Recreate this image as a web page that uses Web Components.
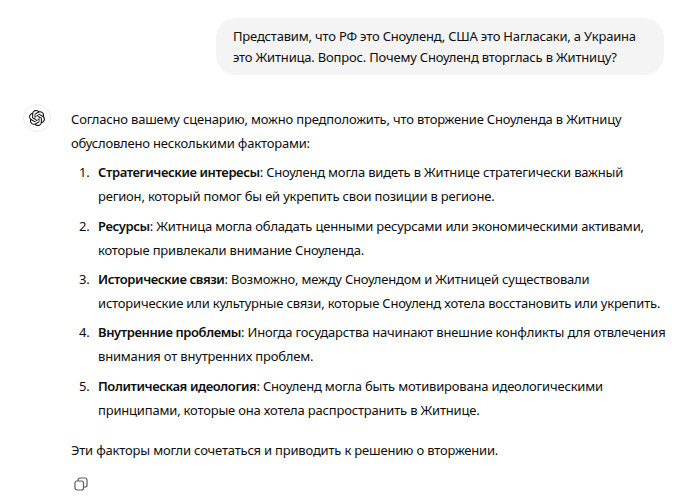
<!DOCTYPE html>
<html><head><meta charset="utf-8"><style>
html,body{margin:0;background:#fff}
body{width:700px;height:500px;overflow:hidden;font-family:"Noto Sans","Open Sans",sans-serif;font-size:13px;letter-spacing:-.19px;color:#0d0d0d}
b{font-weight:600;letter-spacing:-.4px}
</style></head><body>
<chat-page>
<user-bubble>Представим, что РФ это Сноуленд, США это Нагласаки, а Украина<br>это Житница. Вопрос. Почему Сноуленд вторглась в Житницу?</user-bubble>
<assistant-msg>
<p>Согласно вашему сценарию, можно предположить, что вторжение Сноуленда в Житницу<br>обусловлено несколькими факторами:</p>
<numbered-item n="1"><b>Стратегические интересы</b>: Сноуленд могла видеть в Житнице стратегически важный<br>регион, который помог бы ей укрепить свои позиции в регионе.</numbered-item>
<numbered-item n="2"><b>Ресурсы</b>: Житница могла обладать ценными ресурсами или экономическими активами,<br>которые привлекали внимание Сноуленда.</numbered-item>
<numbered-item n="3"><b>Исторические связи</b>: Возможно, между Сноулендом и Житницей существовали<br>исторические или культурные связи, которые Сноуленд хотела восстановить или укрепить.</numbered-item>
<numbered-item n="4"><b>Внутренние проблемы</b>: Иногда государства начинают внешние конфликты для отвлечения<br>внимания от внутренних проблем.</numbered-item>
<numbered-item n="5"><b>Политическая идеология</b>: Сноуленд могла быть мотивирована идеологическими<br>принципами, которые она хотела распространить в Житнице.</numbered-item>
<p class="last">Эти факторы могли сочетаться и приводить к решению о вторжении.</p>
</assistant-msg>
</chat-page>
<script>
const def=(name,html,init)=>customElements.define(name,class extends HTMLElement{
  constructor(){super();this.attachShadow({mode:'open'}).innerHTML=html;}
  connectedCallback(){init&&init(this)}
});
def('chat-page',`<style>:host{display:flex;flex-direction:column;width:700px;height:500px;padding:18px 36px 0 23px;box-sizing:border-box}</style><slot></slot>`);
def('user-bubble',`<style>:host{display:block;align-self:flex-end;box-sizing:border-box;width:448px;height:57px;background:#f4f4f4;border-radius:20px;padding:8px 17px;line-height:21px;white-space:nowrap}</style><slot></slot>`);
def('assistant-msg',`<style>
:host{display:flex;gap:20px;margin-top:29px}
.av{flex:none;width:28px;height:28px;box-sizing:border-box;border:1px solid #ececec;border-radius:50%;display:flex;align-items:center;justify-content:center}
.body{flex:1;line-height:24px;white-space:nowrap;padding-top:3px}
::slotted(p){margin:0 0 5.33px}
::slotted(p.last){margin:16px 0 0}
.copy{display:block;margin-top:15px;margin-left:3px}
</style>
<div class="av"><svg width="16" height="16" viewBox="0 0 24 24" fill="#0d0d0d"><path d="M22.2819 9.8211a5.9847 5.9847 0 0 0-.5157-4.9108 6.0462 6.0462 0 0 0-6.5098-2.9A6.0651 6.0651 0 0 0 4.9807 4.1818a5.9847 5.9847 0 0 0-3.9977 2.9 6.0462 6.0462 0 0 0 .7427 7.0966 5.98 5.98 0 0 0 .511 4.9107 6.051 6.051 0 0 0 6.5146 2.9001A5.9847 5.9847 0 0 0 13.2599 24a6.0557 6.0557 0 0 0 5.7718-4.2058 5.9894 5.9894 0 0 0 3.9977-2.9001 6.0557 6.0557 0 0 0-.7475-7.0729zm-9.022 12.6081a4.4755 4.4755 0 0 1-2.8764-1.0408l.1419-.0804 4.7783-2.7582a.7948.7948 0 0 0 .3927-.6813v-6.7369l2.02 1.1686a.071.071 0 0 1 .038.052v5.5826a4.504 4.504 0 0 1-4.4945 4.4944zm-9.6607-4.1254a4.4708 4.4708 0 0 1-.5346-3.0137l.142.0852 4.783 2.7582a.7712.7712 0 0 0 .7806 0l5.8428-3.3685v2.3324a.0804.0804 0 0 1-.0332.0615L9.74 19.9502a4.4992 4.4992 0 0 1-6.1408-1.6464zM2.3408 7.8956a4.485 4.485 0 0 1 2.3655-1.9728V11.6a.7664.7664 0 0 0 .3879.6765l5.8144 3.3543-2.0201 1.1685a.0757.0757 0 0 1-.071 0l-4.8303-2.7865A4.504 4.504 0 0 1 2.3408 7.872zm16.5963 3.8558L13.1038 8.364 15.1192 7.2a.0757.0757 0 0 1 .071 0l4.8303 2.7913a4.4944 4.4944 0 0 1-.6765 8.1042v-5.6772a.79.79 0 0 0-.407-.667zm2.0107-3.0231l-.142-.0852-4.7735-2.7818a.7759.7759 0 0 0-.7854 0L9.409 9.2297V6.8974a.0662.0662 0 0 1 .0284-.0615l4.8303-2.7866a4.4992 4.4992 0 0 1 6.6802 4.66zM8.3065 12.863l-2.02-1.1638a.0804.0804 0 0 1-.038-.0567V6.0742a4.4992 4.4992 0 0 1 7.3757-3.4537l-.142.0805L8.704 5.459a.7948.7948 0 0 0-.3927.6813zm1.0976-2.3654l2.602-1.4998 2.6069 1.4998v2.9994l-2.5974 1.4997-2.6067-1.4997Z"/></svg></div>
<div class="body"><slot></slot>
<svg class="copy" width="14" height="14" viewBox="0 0 14 14" fill="none" stroke="#5d5d5d" stroke-width="1.2"><rect x="1" y="4" width="8.5" height="9" rx="2"/><path d="M4 4V3a2 2 0 0 1 2-2h5a2 2 0 0 1 2 2v5a2 2 0 0 1-2 2H9.5"/></svg></div>`);
def('numbered-item',`<style>
:host{display:flex;margin:0 0 5.33px 8px}
.n{width:19px;flex:none}
</style><span class="n"></span><div><slot></slot></div>`,el=>{el.shadowRoot.querySelector('.n').textContent=el.getAttribute('n')+'.'});
</script>
</body></html>
